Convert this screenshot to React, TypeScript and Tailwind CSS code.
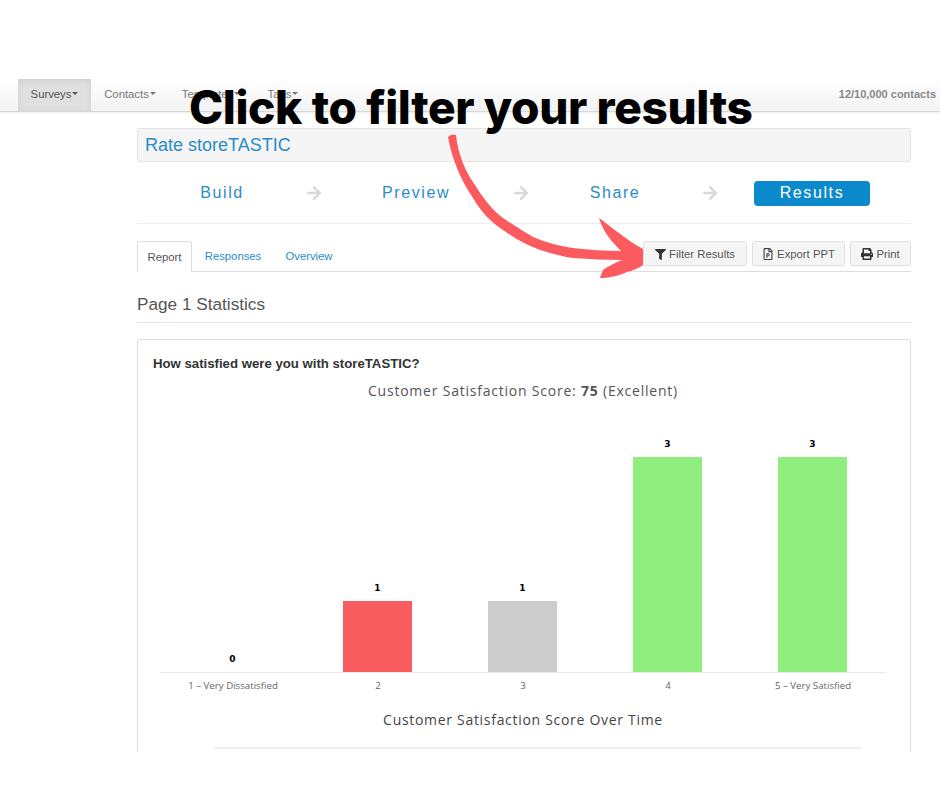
import { ArrowRight } from 'lucide-react'
import { FaFilter, FaPrint, FaRegFilePowerpoint } from 'react-icons/fa'

const bars = [
  { label: '1 – Very Dissatisfied', value: 0, height: 'h-0', color: 'bg-transparent' },
  { label: '2', value: 1, height: 'h-[71px]', color: 'bg-[#f95d5f]' },
  { label: '3', value: 1, height: 'h-[71px]', color: 'bg-[#cccccc]' },
  { label: '4', value: 3, height: 'h-[215px]', color: 'bg-[#90ee7e]' },
  { label: '5 – Very Satisfied', value: 3, height: 'h-[215px]', color: 'bg-[#90ee7e]' },
]

function NavItem({ label, active, width }: { label: string; active?: boolean; width: string }) {
  return (
    <div className={`flex h-full items-center justify-center pb-[2px] text-[11.3px] ${width} ${active ? 'bg-[#e0e0e0] text-[#555] shadow-[inset_0_2px_6px_rgba(0,0,0,0.08)]' : 'text-[#777]'}`}>
      {label}
      <span className="ml-[1px] mt-[-1px] border-x-[3px] border-t-[3px] border-x-transparent border-t-current" />
    </div>
  )
}

function StepArrow({ width }: { width: string }) {
  return (
    <div className={`flex justify-center ${width}`}>
      <ArrowRight size={20} strokeWidth={2.8} className="text-[#d8d8d8]" />
    </div>
  )
}

function ToolButton({ children, width }: { children: React.ReactNode; width: string }) {
  return (
    <div className={`flex h-[25px] items-center justify-center gap-[3px] rounded-[3px] border border-[#e0e0e0] bg-[#f5f5f5] pt-[1px] text-[11.3px] text-[#555] ${width}`}>
      {children}
    </div>
  )
}

export default function App() {
  return (
    <div className="relative h-[788px] w-[940px] overflow-hidden bg-white font-['Liberation_Sans',sans-serif]">
      <div className="pt-[79px]">
        {/* Navbar */}
        <div className="flex h-[33px] items-center border-b border-[#d8d8d8] bg-gradient-to-b from-white to-[#f2f2f2] pl-[18px] pr-[4px] shadow-[0_1px_2px_rgba(0,0,0,0.08)]">
          <NavItem label="Surveys" active width="w-[73px]" />
          <NavItem label="Contacts" width="w-[78px]" />
          <NavItem label="Templates" width="w-[84px]" />
          <NavItem label="Tags" width="w-[60px]" />
          <div className="ml-auto pb-[2px] text-[11px] font-bold text-[#888]">12/10,000 contacts</div>
        </div>

        {/* Content */}
        <div className="ml-[137px] h-[640px] w-[774px] overflow-hidden pt-[16px]">
          <div className="flex h-[34px] items-center rounded-[3px] border border-[#e3e3e3] bg-[#f5f5f5] pl-[7px] text-[18px] text-[#2a8bcb]">
            Rate storeTASTIC
          </div>

          <div className="mt-[18px] flex h-[26px] items-center pl-[36px] text-[16px] tracking-[1.6px] text-[#2a8bcb]">
            <div className="w-[98px] text-center">Build</div>
            <StepArrow width="w-[86px]" />
            <div className="w-[118px] text-center">Preview</div>
            <StepArrow width="w-[92px]" />
            <div className="w-[96px] text-center">Share</div>
            <StepArrow width="w-[93px]" />
            <div className="-ml-[2px] flex h-[25px] w-[116px] items-center justify-center rounded-[4px] bg-[#0a8acb] text-white">Results</div>
          </div>

          <div className="mt-[17px] border-t border-[#eeeeee]" />

          {/* Tabs */}
          <div className="mt-[17px] flex h-[31px] items-start border-b border-[#dddddd] text-[11.3px]">
            <div className="relative flex h-[31px] w-[55px] items-center justify-center rounded-t-[3px] border border-b-0 border-[#dddddd] bg-white text-[#555]">Report</div>
            <div className="flex h-[30px] w-[82px] items-center justify-center text-[#2a8bcb]">Responses</div>
            <div className="flex h-[30px] w-[70px] items-center justify-center text-[#2a8bcb]">Overview</div>
            <div className="ml-auto flex gap-[5px]">
              <ToolButton width="w-[104px]"><FaFilter size={11} className="text-[#333]" />Filter Results</ToolButton>
              <ToolButton width="w-[93px]"><FaRegFilePowerpoint size={12} className="text-[#444]" />Export PPT</ToolButton>
              <ToolButton width="w-[61px]"><FaPrint size={12} className="text-[#333]" />Print</ToolButton>
            </div>
          </div>

          <div className="mt-[22px] text-[17.2px] leading-[20px] text-[#555]">Page 1 Statistics</div>
          <div className="mt-[8px] border-t border-[#e5e5e5]" />

          {/* Card */}
          <div className="mt-[16px] h-[460px] rounded-[3px] border border-[#dddddd] px-[15px] pt-[16px] font-['Open_Sans',sans-serif]">
            <div className="font-['Liberation_Sans',sans-serif] text-[13.2px] font-bold leading-[15px] text-[#333]">How satisfied were you with storeTASTIC?</div>
            <div className="mt-[11px] pr-[2px] text-center text-[14px] leading-[18px] tracking-[0.78px] text-[#555]">
              Customer Satisfaction Score: <span className="font-bold">75</span> (Excellent)
            </div>

            <div className="ml-[7px] mt-[41px] w-[725px]">
              <div className="flex h-[232px] items-end border-b border-[#e6e9f2]">
                {bars.map((bar) => (
                  <div key={bar.label} className="flex w-[145px] flex-col items-center">
                    <div className="mb-[8px] font-['DejaVu_Sans',sans-serif] text-[9px] font-bold leading-[10px] text-black">{bar.value}</div>
                    <div className={`w-[69px] ${bar.height} ${bar.color}`} />
                  </div>
                ))}
              </div>
              <div className="mt-[7px] flex">
                {bars.map((bar) => (
                  <div key={bar.label} className="w-[145px] pl-[1px] text-center text-[9.7px] leading-[12px] text-[#666]">{bar.label}</div>
                ))}
              </div>
            </div>

            <div className="mt-[19px] pr-[2px] text-center text-[14px] leading-[18px] tracking-[0.7px] text-[#444]">Customer Satisfaction Score Over Time</div>
            <div className="ml-[61px] mt-[18px] w-[647px] border-t-2 border-[#eeeeee]" />
          </div>
        </div>
      </div>

      {/* Annotation overlay */}
      <div className="absolute left-[189px] top-[77px] whitespace-nowrap font-['Inter',sans-serif] text-[46px] font-extrabold leading-[60px] tracking-[-0.38px] text-black">
        Click to filter your results
      </div>
      <svg className="absolute left-0 top-0" width="940" height="788" viewBox="0 0 940 788" fill="#fb5a5e">
        <path d="M448 137 C451 134 454 134 456 135 C458 155 466 172 473 182 C483 198 492 210 503 218 C518 228 526 233 533 237 C547 243 560 246 573 248 C590 250 605 251 621 251 C614 244 607 236 603 228 C601 224 600 221 599 218 C610 226 628 241 643 249 L643 265 C636 270 630 271 627 272 C618 276 608 278 600 278 C601 275 602 272 603 270 C608 266 615 263 622 260 C605 260 590 259 573 258 C560 256 550 253 540 250 C525 244 514 238 503 230 C490 222 480 210 473 198 C462 182 452 160 448 137 Z" />
      </svg>
    </div>
  )
}
